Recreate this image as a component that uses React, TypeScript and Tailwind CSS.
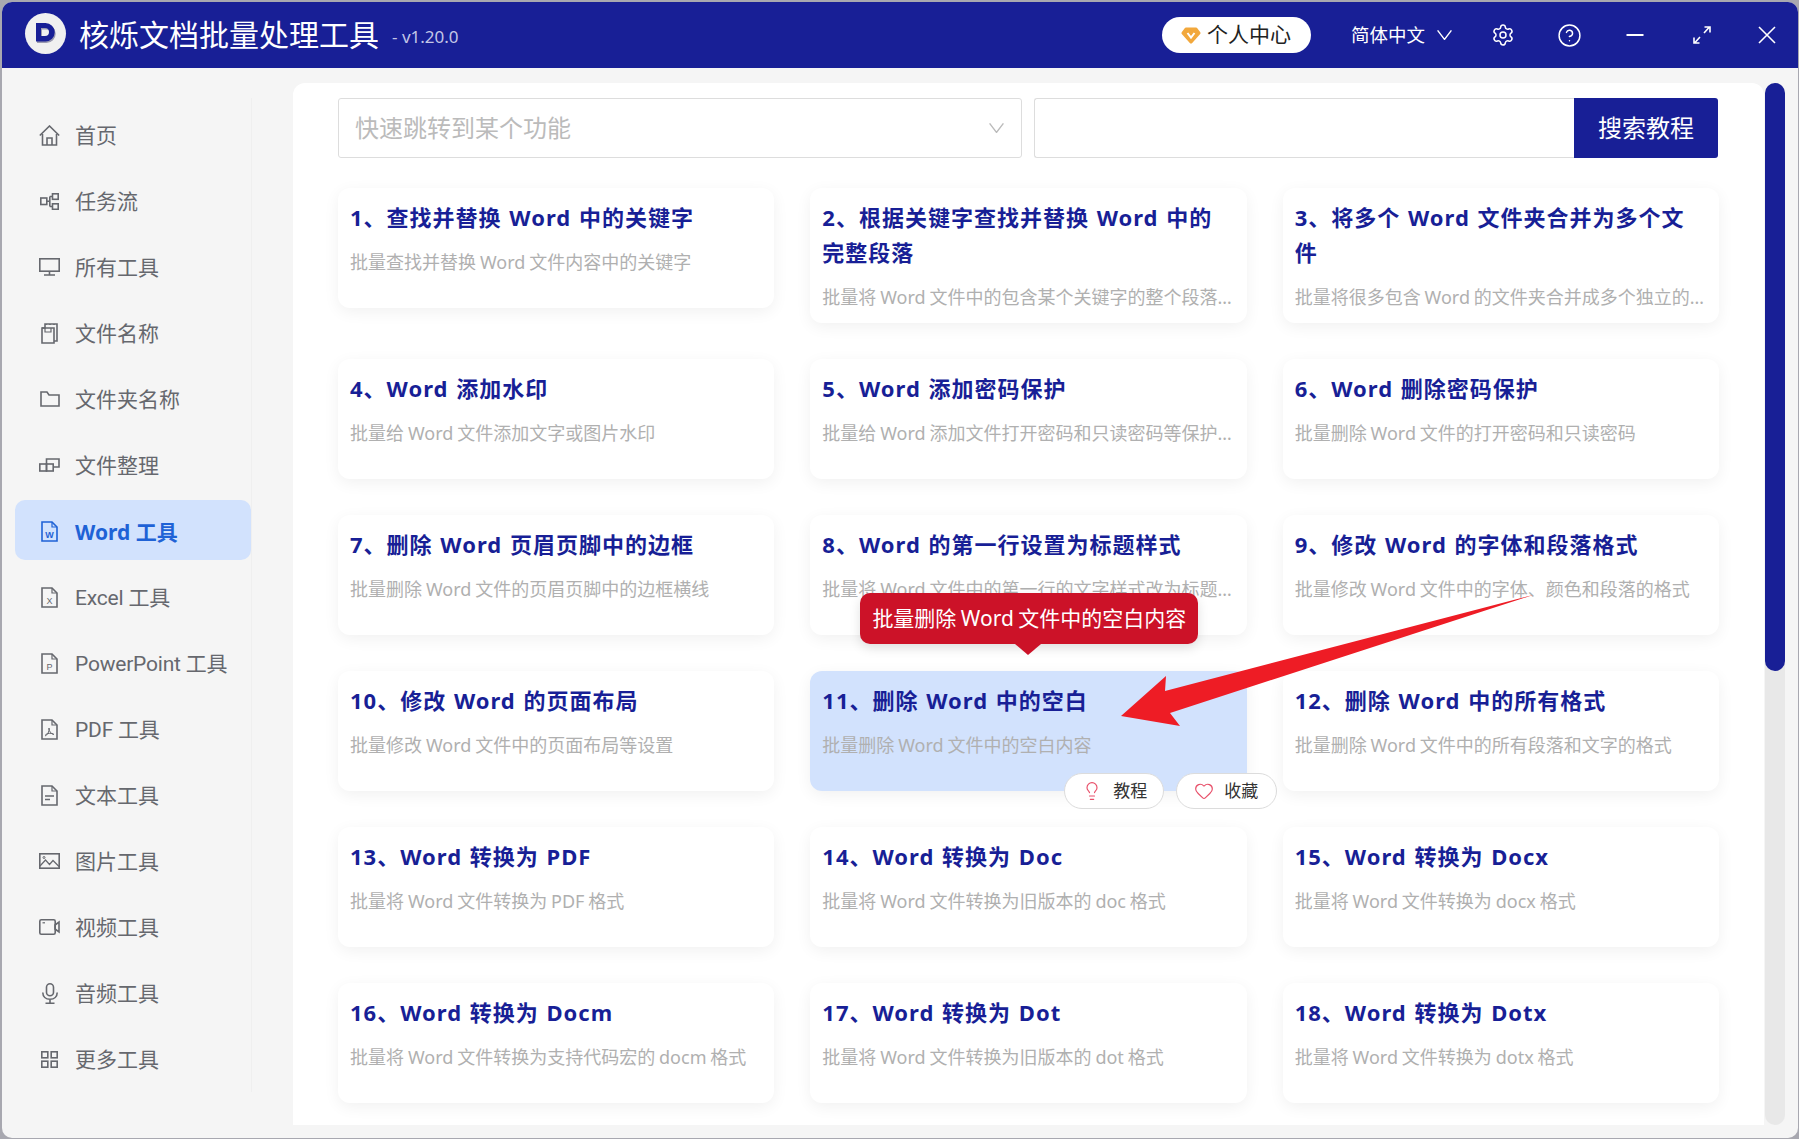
import React from "react";
import { Settings, CircleHelp, Lightbulb, Heart } from "lucide-react";

const font = "font-['Noto_Sans','Noto_Sans_CJK_SC',sans-serif]";

const Vee = ({ className }: { className?: string }) => (
  <svg width="15" height="10" viewBox="0 0 15 10" fill="none" stroke="currentColor" strokeWidth="1.4" className={className}>
    <path d="M0.6 0.4L7.5 9.4L14.4 0.4" />
  </svg>
);

const S = { fill: "none", stroke: "currentColor", strokeWidth: 1.6 };

function FileLetter({ letter, children }: { letter?: string; children?: React.ReactNode }) {
  return (
    <svg width="17" height="21" viewBox="0 0 17 21" {...S}>
      <path d="M1 1h10l5 5v14H1z" />
      <path d="M11 1v5h5" strokeWidth="1.2" />
      {letter && (
        <text x="8.5" y="16.5" textAnchor="middle" fontSize="9" fill="currentColor" stroke="none" fontFamily="Liberation Sans">{letter}</text>
      )}
      {children}
    </svg>
  );
}
const HomeIcon = () => (
  <svg width="21" height="21" viewBox="0 0 21 21" {...S}>
    <path d="M0.8 10.5L10.5 1l9.7 9.5" />
    <path d="M3.5 9v11h14V9" />
    <path d="M8 20v-7h5v7" />
  </svg>
);
const FlowIcon = () => (
  <svg width="19" height="17" viewBox="0 0 19 17" {...S}>
    <rect x="0.8" y="5" width="6" height="6.5" />
    <rect x="12.5" y="0.8" width="5.7" height="5.5" />
    <rect x="12.5" y="10.8" width="5.7" height="5.5" />
    <path d="M6.8 8.2h3M9.8 3.5v10M9.8 3.5h2.7M9.8 13.5h2.7" />
  </svg>
);
const MonitorIcon = () => (
  <svg width="21" height="18" viewBox="0 0 21 18" {...S}>
    <rect x="0.8" y="0.8" width="19.4" height="12.4" />
    <path d="M10.5 13v4M5 17h11" />
  </svg>
);
const CopyFileIcon = () => (
  <svg width="17" height="21" viewBox="0 0 17 21" {...S}>
    <path d="M1 5h3l0-4h12v17h-3" />
    <path d="M1 5v15h12V5z" />
    <path d="M5 1v1M9 1v1M13 1v1" />
    <path d="M4 5v4h6V5" strokeWidth="1.2" />
  </svg>
);
const FolderIcon = () => (
  <svg width="20" height="16" viewBox="0 0 20 16" {...S}>
    <path d="M1 15V1h6l2 3h10v11z" />
  </svg>
);
const ArrangeIcon = () => (
  <svg width="21" height="14" viewBox="0 0 21 14" {...S}>
    <path d="M7.5 6V1h12.5v8h-6" />
    <rect x="0.8" y="6" width="6.7" height="7" />
    <rect x="7.5" y="6" width="6.7" height="7" />
  </svg>
);
const ImageIcon = () => (
  <svg width="21" height="16" viewBox="0 0 21 16" {...S}>
    <rect x="0.8" y="0.8" width="19.4" height="14.4" />
    <path d="M1 13l5.5-6 4 4.5 3.5-4 6 6" strokeWidth="1.2" />
    <circle cx="5" cy="4.5" r="1" strokeWidth="1" />
  </svg>
);
const VideoIcon = () => (
  <svg width="21" height="16" viewBox="0 0 21 16" {...S}>
    <rect x="0.8" y="0.8" width="15.4" height="14.4" rx="1.5" />
    <path d="M16 6l4-3v10l-4-3z" />
    <path d="M3.5 3.8h2.5" strokeWidth="1.2" />
  </svg>
);
const MicIcon = () => (
  <svg width="16" height="21" viewBox="0 0 16 21" {...S}>
    <rect x="4.5" y="0.8" width="7" height="12" rx="3.5" />
    <path d="M0.8 9.5c0 4.2 3 6.8 7.2 6.8s7.2-2.6 7.2-6.8M8 16.5v3.7M3.5 20.2h9" />
  </svg>
);
const GridIcon = () => (
  <svg width="17" height="17" viewBox="0 0 17 17" {...S}>
    <rect x="0.8" y="0.8" width="6" height="6" />
    <rect x="10.2" y="0.8" width="6" height="6" />
    <rect x="0.8" y="10.2" width="6" height="6" />
    <rect x="10.2" y="10.2" width="6" height="6" />
  </svg>
);

const nav: { label: string; icon: React.ReactNode; active?: boolean }[] = [
  { label: "首页", icon: <HomeIcon /> },
  { label: "任务流", icon: <FlowIcon /> },
  { label: "所有工具", icon: <MonitorIcon /> },
  { label: "文件名称", icon: <CopyFileIcon /> },
  { label: "文件夹名称", icon: <FolderIcon /> },
  { label: "文件整理", icon: <ArrangeIcon /> },
  { label: "Word 工具", icon: <FileLetter letter="W" />, active: true },
  { label: "Excel 工具", icon: <FileLetter letter="X" /> },
  { label: "PowerPoint 工具", icon: <FileLetter letter="P" /> },
  {
    label: "PDF 工具",
    icon: (
      <FileLetter>
        <path d="M4 17c2.500-0.800 4.500-4.500 4-8 0 3.500 2 6 5 6.500M4.500 15.500c3-1.500 5.500-1.500 8 -0.500" strokeWidth="1" />
      </FileLetter>
    ),
  },
  {
    label: "文本工具",
    icon: (
      <FileLetter>
        <path d="M4 11h9M4 14.500h5" />
      </FileLetter>
    ),
  },
  { label: "图片工具", icon: <ImageIcon /> },
  { label: "视频工具", icon: <VideoIcon /> },
  { label: "音频工具", icon: <MicIcon /> },
  { label: "更多工具", icon: <GridIcon /> },
];

const cards: [string, string][] = [
  ["1、查找并替换 Word 中的关键字", "批量查找并替换 Word 文件内容中的关键字"],
  ["2、根据关键字查找并替换 Word 中的完整段落", "批量将 Word 文件中的包含某个关键字的整个段落替换为新的内容"],
  ["3、将多个 Word 文件夹合并为多个文件", "批量将很多包含 Word 的文件夹合并成多个独立的文件夹内容"],
  ["4、Word 添加水印", "批量给 Word 文件添加文字或图片水印"],
  ["5、Word 添加密码保护", "批量给 Word 添加文件打开密码和只读密码等保护措施内容"],
  ["6、Word 删除密码保护", "批量删除 Word 文件的打开密码和只读密码"],
  ["7、删除 Word 页眉页脚中的边框", "批量删除 Word 文件的页眉页脚中的边框横线"],
  ["8、Word 的第一行设置为标题样式", "批量将 Word 文件中的第一行的文字样式改为标题样式内容"],
  ["9、修改 Word 的字体和段落格式", "批量修改 Word 文件中的字体、颜色和段落的格式"],
  ["10、修改 Word 的页面布局", "批量修改 Word 文件中的页面布局等设置"],
  ["11、删除 Word 中的空白", "批量删除 Word 文件中的空白内容"],
  ["12、删除 Word 中的所有格式", "批量删除 Word 文件中的所有段落和文字的格式"],
  ["13、Word 转换为 PDF", "批量将 Word 文件转换为 PDF 格式"],
  ["14、Word 转换为 Doc", "批量将 Word 文件转换为旧版本的 doc 格式"],
  ["15、Word 转换为 Docx", "批量将 Word 文件转换为 docx 格式"],
  ["16、Word 转换为 Docm", "批量将 Word 文件转换为支持代码宏的 docm 格式"],
  ["17、Word 转换为 Dot", "批量将 Word 文件转换为旧版本的 dot 格式"],
  ["18、Word 转换为 Dotx", "批量将 Word 文件转换为 dotx 格式"],
];

function Card({ title, desc, active }: { title: string; desc: string; active?: boolean }) {
  return (
    <div className={`relative min-h-[120px] rounded-[12px] px-3 pt-3 pb-[11px] shadow-[0_4px_16px_rgba(0,0,0,0.06)] ${active ? "rounded-br-none bg-[#d2e2fd]" : "bg-white"}`}>
      <div className="pr-1 text-[22px] leading-[35px] font-bold tracking-[1px] [word-spacing:1px] text-[#181f96]">{title}</div>
      <div className="mt-3 h-[30px] truncate text-[18px] leading-[30px] [word-spacing:-0.8px] text-[#b0b0b0]">{desc}</div>
      {active && (
        <>
          <div className="absolute left-[50px] top-[-78px] h-[51px] w-[338px] rounded-[10px] bg-[#cc1228] text-center text-[21px] leading-[51px] [word-spacing:-1px] text-white shadow-[0_4px_12px_rgba(0,0,0,0.12)]">
            批量删除 Word 文件中的空白内容
            <div className="absolute left-[155px] top-full h-0 w-0 border-x-[13px] border-t-[11px] border-x-transparent border-t-[#cc1228]" />
          </div>
          <div className="absolute left-[254px] top-[102px] flex gap-3">
            <div className="flex h-9 w-[100px] items-center gap-[11px] rounded-full border border-[#dcdcdc] bg-white pl-[17px] text-[17px] text-[#333]">
              <Lightbulb size={20} strokeWidth={1.4} className="text-[#e8506a]" />
              教程
            </div>
            <div className="flex h-9 w-[101px] items-center gap-[10px] rounded-full border border-[#dcdcdc] bg-white pl-[17px] text-[17px] text-[#333]">
              <Heart size={20} strokeWidth={1.4} className="text-[#e8506a]" />
              收藏
            </div>
          </div>
        </>
      )}
    </div>
  );
}

export default function App() {
  return (
    <div className={`relative h-[1139px] w-[1799px] overflow-hidden bg-[#a8a8b0] pt-[2px] pr-px pb-px pl-[2px] ${font}`}>
      <div className="flex h-full flex-col overflow-hidden rounded-[10px] bg-[#f5f5f5]">
        {/* Title bar */}
        <header className="flex h-[66px] shrink-0 items-center bg-[#181f96] text-white">
          <div className="mb-1 ml-[23px] flex h-[41px] w-[41px] items-center justify-center rounded-full bg-[#f0f0f0]">
            <svg width="24" height="24" viewBox="0 0 24 24">
              <path fillRule="evenodd" fill="#9a9ab0" d="M3 3.5h9.5a9.2 9.2 0 0 1 0 18.4H3zM8 8.5v8h4a4 4 0 0 0 0-8z" />
              <path fillRule="evenodd" fill="#181f96" d="M2 2h9.5a9.2 9.2 0 0 1 0 18.4H2zM7 7v8h4a4 4 0 0 0 0-8z" />
            </svg>
          </div>
          <div className="ml-[13px] text-[30px] leading-none">核烁文档批量处理工具</div>
          <div className="ml-[13px] mt-1 text-[17px] text-[#c3c6e6]">- v1.20.0</div>
          <div className="ml-auto flex h-9 w-[149px] items-center rounded-full bg-white pl-[19px] text-[21px] text-[#222]">
            <svg width="20" height="17" viewBox="0 0 20 17" className="shrink-0">
              <path d="M5 0.5h10c0.6 0 1 0.3 1.3 0.7l3 4c0.4 0.6 0.4 1.2-0.1 1.8l-8 9c-0.6 0.7-1.8 0.7-2.4 0l-8-9C0.3 6.4 0.3 5.8 0.7 5.2l3-4C4 0.8 4.4 0.5 5 0.5z" fill="#f2a83c" />
              <path d="M6.5 6l3.5 4.5L13.5 6" fill="none" stroke="#fff" strokeWidth="2" />
            </svg>
            <span className="ml-[6px]">个人中心</span>
          </div>
          <div className="ml-[40px] text-[18.5px]">简体中文</div>
          <Vee className="ml-3" />
          <Settings size={24} strokeWidth={1.5} className="ml-[39px]" />
          <CircleHelp size={25} strokeWidth={1.4} className="ml-[42px]" />
          <svg width="22" height="22" viewBox="0 0 22 22" fill="none" stroke="currentColor" strokeWidth="2" className="ml-[42px]">
            <path d="M2.5 11h17" />
          </svg>
          <svg width="22" height="22" viewBox="0 0 22 22" fill="none" stroke="currentColor" strokeWidth="1.6" className="ml-[45px]">
            <path d="M13 9l5-5.500M13.500 3h5.500v5.500M9 13l-5 5.500M3 13.500V19h5.500" />
          </svg>
          <svg width="22" height="22" viewBox="0 0 22 22" fill="none" stroke="currentColor" strokeWidth="1.6" className="ml-[43px] mr-5">
            <path d="M3 3l16 16M19 3L3 19" />
          </svg>
        </header>

        <div className="flex min-h-0 flex-1">
          {/* Sidebar */}
          <aside className="ml-[13px] mt-[30px] mb-[46px] flex w-[237px] shrink-0 flex-col gap-[6px] border-r border-[#efefef] pt-[6px]">
            {nav.map((n) => (
              <div
                key={n.label}
                className={`flex h-[60px] w-[236px] shrink-0 items-center rounded-[10px] pt-[2px] text-[21px] ${n.active ? "bg-[#d2e2fd] font-bold text-[#1f62d6]" : "font-['Roboto','Noto_Sans_CJK_SC',sans-serif] text-[#66686e]"}`}
              >
                <span className="flex w-[60px] shrink-0 pl-[24px]">
                  <span className="flex h-6 w-[21px] items-center justify-center">{n.icon}</span>
                </span>
                <span className={`mt-[3px] ${!n.active && /[A-Za-z]/.test(n.label) ? "tracking-[-0.2px]" : ""}`}>{n.label}</span>
              </div>
            ))}
          </aside>

          {/* Panel */}
          <main className="mt-[15px] mb-[13px] ml-[41px] h-[1042px] w-[1471px] shrink-0 overflow-hidden rounded-t-[12px] bg-white px-[45px] pt-[15px]">
            <div className="flex h-[60px] gap-3">
              <div className="flex h-[60px] w-[684px] items-center justify-between rounded-[3px] border border-[#dddddd] pr-[17px] pl-4 text-[24px] text-[#bbbbbb]">
                快速跳转到某个功能
                <Vee />
              </div>
              <div className="flex w-[684px]">
                <div className="flex-1 rounded-l-[3px] border border-r-0 border-[#dddddd]" />
                <div className="flex w-[144px] items-center justify-center rounded-r-[3px] bg-[#181f96] text-[24px] text-white">搜索教程</div>
              </div>
            </div>
            <div className="mt-[30px] grid grid-cols-3 items-start gap-x-9 gap-y-9">
              {cards.map(([t, d], i) => (
                <Card key={t} title={t} desc={d} active={i === 10} />
              ))}
            </div>
          </main>

          {/* Scrollbar */}
          <div className="mt-[15px] mb-[13px] ml-px h-[1042px] w-5 shrink-0 rounded-full bg-[#e8e8e8]">
            <div className="h-[588px] w-5 rounded-full bg-[#181f96]" />
          </div>
        </div>
      </div>

      {/* Annotation arrow drawn over the screenshot */}
      <svg className="absolute inset-0" width="1799" height="1139" fill="#ee1c25">
        <polygon points="1533,595 1165,691 1166,676 1121,716 1180,726 1170,713" />
      </svg>
    </div>
  );
}
